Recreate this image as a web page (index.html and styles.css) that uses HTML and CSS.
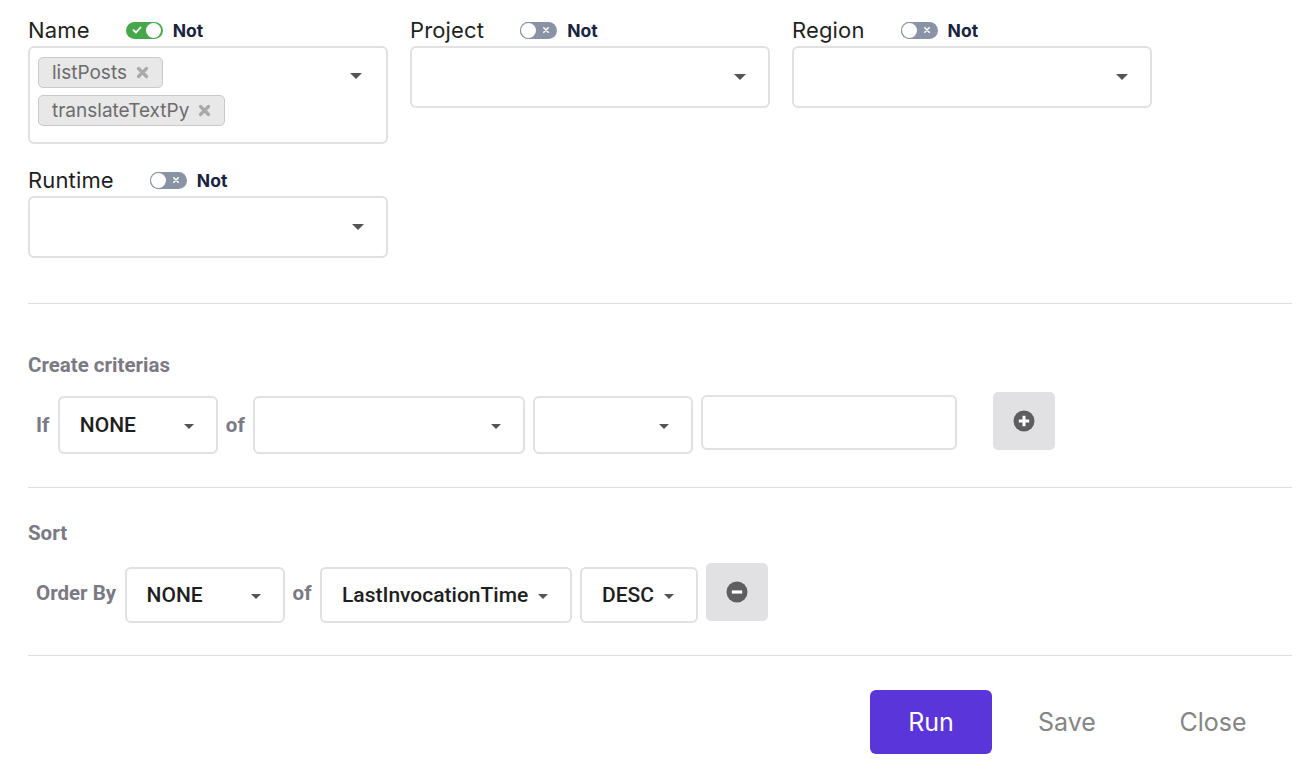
FILE: index.html
```html
<!DOCTYPE html>
<html>
<head>
<meta charset="utf-8">
<link rel="stylesheet" href="styles.css">
</head>
<body>
<div class="page">
  <div class="fields">
    <div class="field">
      <div class="field-head">
        <span class="field-label">Name</span>
        <span class="toggle on"><svg class="tg-icon" width="10" height="8" viewBox="0 0 10 8"><path d="M1.5 4.2 L4 6.5 L8.5 1.5" fill="none" stroke="#fff" stroke-width="1.8" stroke-linecap="round" stroke-linejoin="round"/></svg><span class="knob"></span></span>
        <span class="not">Not</span>
      </div>
      <div class="select-box multi">
        <div class="tags">
          <span class="tag">listPosts<svg class="tag-x" width="13" height="13" viewBox="0 0 13 13"><path d="M2.5 2.5 L10.5 10.5 M10.5 2.5 L2.5 10.5" stroke="#a9a9a9" stroke-width="3.2" stroke-linecap="round"/></svg></span>
          <span class="tag">translateTextPy<svg class="tag-x" width="13" height="13" viewBox="0 0 13 13"><path d="M2.5 2.5 L10.5 10.5 M10.5 2.5 L2.5 10.5" stroke="#a9a9a9" stroke-width="3.2" stroke-linecap="round"/></svg></span>
        </div>
        <span class="caret big multi-caret"></span>
      </div>
    </div>
    <div class="field">
      <div class="field-head">
        <span class="field-label">Project</span>
        <span class="toggle off"><span class="knob"></span><svg class="tg-icon" width="8" height="8" viewBox="0 0 8 8"><path d="M1.8 1.8 L6.2 6.2 M6.2 1.8 L1.8 6.2" stroke="#fff" stroke-width="1.6" stroke-linecap="round"/></svg></span>
        <span class="not">Not</span>
      </div>
      <div class="select-box single"><span class="caret big"></span></div>
    </div>
    <div class="field">
      <div class="field-head">
        <span class="field-label">Region</span>
        <span class="toggle off"><span class="knob"></span><svg class="tg-icon" width="8" height="8" viewBox="0 0 8 8"><path d="M1.8 1.8 L6.2 6.2 M6.2 1.8 L1.8 6.2" stroke="#fff" stroke-width="1.6" stroke-linecap="round"/></svg></span>
        <span class="not">Not</span>
      </div>
      <div class="select-box single"><span class="caret big"></span></div>
    </div>
    <div class="field">
      <div class="field-head">
        <span class="field-label">Runtime</span>
        <span class="toggle off"><span class="knob"></span><svg class="tg-icon" width="8" height="8" viewBox="0 0 8 8"><path d="M1.8 1.8 L6.2 6.2 M6.2 1.8 L1.8 6.2" stroke="#fff" stroke-width="1.6" stroke-linecap="round"/></svg></span>
        <span class="not">Not</span>
      </div>
      <div class="select-box single"><span class="caret big"></span></div>
    </div>
  </div>

  <hr class="divider first">

  <div class="section-title criteria-title">Create criterias</div>
  <div class="row criteria-row">
    <span class="row-word">If</span>
    <div class="dd w160"><span class="dd-text">NONE</span><span class="caret"></span></div>
    <span class="row-word">of</span>
    <div class="dd w272"><span class="dd-text"></span><span class="caret"></span></div>
    <div class="dd w160"><span class="dd-text"></span><span class="caret"></span></div>
    <div class="text-input"></div>
    <div class="icon-btn add-btn">
      <svg width="22" height="22" viewBox="0 0 22 22"><circle cx="11" cy="11" r="10.5" fill="#5e5e5e"/><path d="M11 5.8 V16.2 M5.8 11 H16.2" stroke="#fff" stroke-width="3"/></svg>
    </div>
  </div>

  <hr class="divider">

  <div class="section-title sort-title">Sort</div>
  <div class="row sort-row">
    <span class="row-word">Order By</span>
    <div class="dd w160"><span class="dd-text">NONE</span><span class="caret"></span></div>
    <span class="row-word">of</span>
    <div class="dd w252"><span class="dd-text">LastInvocationTime</span><span class="caret"></span></div>
    <div class="dd w118"><span class="dd-text">DESC</span><span class="caret"></span></div>
    <div class="icon-btn remove-btn">
      <svg width="22" height="22" viewBox="0 0 22 22"><circle cx="11" cy="11" r="10.5" fill="#5e5e5e"/><path d="M5.8 11 H16.2" stroke="#fff" stroke-width="3.2"/></svg>
    </div>
  </div>

  <hr class="divider">

  <div class="actions">
    <button class="btn primary">Run</button>
    <button class="btn ghost save">Save</button>
    <button class="btn ghost close">Close</button>
  </div>
</div>
</body>
</html>
```
FILE: styles.css
```css
* { box-sizing: border-box; }
html, body { margin: 0; padding: 0; background: #fff; }
body { font-family: Inter, "Noto Sans", sans-serif; color: #222; }
.page { padding: 14px 20px 0 28px; width: 1312px; }

.fields {
  display: grid;
  grid-template-columns: 360px 360px 360px;
  column-gap: 22px;
  row-gap: 20px;
  align-items: start;
}
.field-head { display: flex; align-items: center; height: 32px; }
.field-label { font-size: 22px; color: #1f1f1f; letter-spacing: 0.15px; }
.toggle {
  position: relative;
  width: 37px; height: 17px; border-radius: 9px;
  margin-left: 36px; margin-right: 10px;
  display: flex; align-items: center;
  padding: 0 2px;
}
.toggle.on { background: #47a84b; justify-content: space-between; padding-left: 6px; }
.toggle.off { background: #8a93a5; justify-content: space-between; padding-right: 7px; }
.knob { width: 15px; height: 15px; border-radius: 50%; background: #fff; display: block; }
.toggle.off .knob { margin-left: -1px; box-shadow: 0 0 0 1px #8a93a5; }
.tg-icon { display: block; }
.not { font-weight: 700; font-size: 17.5px; color: #172340; }

.select-box {
  border: 2px solid #e1e1e1;
  border-radius: 6px;
  display: flex;
  position: relative;
}
.select-box.single { height: 62px; align-items: center; justify-content: flex-end; padding-right: 22px; }
.select-box.multi { height: 98px; padding: 9px 24px 16px 8px; align-items: flex-start; }
.tags { flex: 1; display: flex; flex-direction: column; align-items: flex-start; gap: 7px; }
.tag {
  display: inline-flex; align-items: center;
  height: 31px; padding: 0 13px 0 13px;
  background: #e8e8e8; border: 1.5px solid #c9c9c9; border-radius: 5px;
  font-size: 19px; color: #6c6c6c;
}
.tag-x { margin-left: 9px; }
.multi-caret { margin-top: 16px; }

.caret {
  width: 0; height: 0;
  border-left: 5px solid transparent;
  border-right: 5px solid transparent;
  border-top: 5px solid #555;
  display: block; flex: none;
}
.caret.big { border-left-width: 6px; border-right-width: 6px; border-top-width: 6px; }

.divider { border: 0; border-top: 1.5px solid #dedede; margin: 0; height: 0; }
.divider.first { margin-top: 45px; }

.section-title {
  font-family: Roboto, "Noto Sans", sans-serif;
  font-weight: 700; font-size: 20.5px; color: #7a7984;
}
.criteria-title { margin-top: 50px; line-height: 22px; }
.sort-title { margin-top: 34px; line-height: 22px; }

.row { display: flex; align-items: center; padding-left: 8px; }
.criteria-row { margin-top: 18px; height: 62px; margin-bottom: 31px; }
.sort-row { margin-top: 18px; height: 62px; margin-bottom: 31px; }
.row-word {
  font-family: Roboto, "Noto Sans", sans-serif;
  font-weight: 700; font-size: 20.5px; color: #7a7984;
  margin-right: 8.5px;
}
.dd {
  height: 58px;
  border: 2px solid #e1e1e1; border-radius: 6px;
  display: flex; align-items: center; justify-content: space-between;
  padding: 0 22px 0 20px;
  margin-right: 8px;
  font-family: Roboto, "Noto Sans", sans-serif;
  font-weight: 500; font-size: 21px; color: #1e1e1e;
}
.sort-row .dd { height: 56px; margin-top: 4px; }
.dd .caret { margin-top: 2px; }
.w160 { width: 160px; }
.w272 { width: 272px; }
.w252 { width: 252px; }
.w118 { width: 118px; }
.text-input {
  width: 256px; height: 55px;
  border: 2px solid #e1e1e1; border-radius: 6px;
  margin-top: -5px;
}
.icon-btn {
  width: 62px; height: 58px;
  background: #e1e1e3; border-radius: 5px;
  display: flex; align-items: center; justify-content: center;
}
.add-btn { margin-left: 36px; margin-top: -8px; }
.remove-btn { margin-top: -2px; }

.actions { display: flex; justify-content: flex-end; align-items: center; padding-top: 34px; padding-right: 18px; }
.btn {
  font-family: Inter, "Noto Sans", sans-serif;
  font-size: 25px; border: 0; background: none; cursor: pointer;
  height: 64px; border-radius: 6px;
}
.btn.primary { background: #5a35d9; color: #fff; width: 122px; }
.btn.ghost { color: #858585; width: 122px; }
.btn.save { margin-left: 14px; }
.btn.close { margin-left: 24px; }
```
